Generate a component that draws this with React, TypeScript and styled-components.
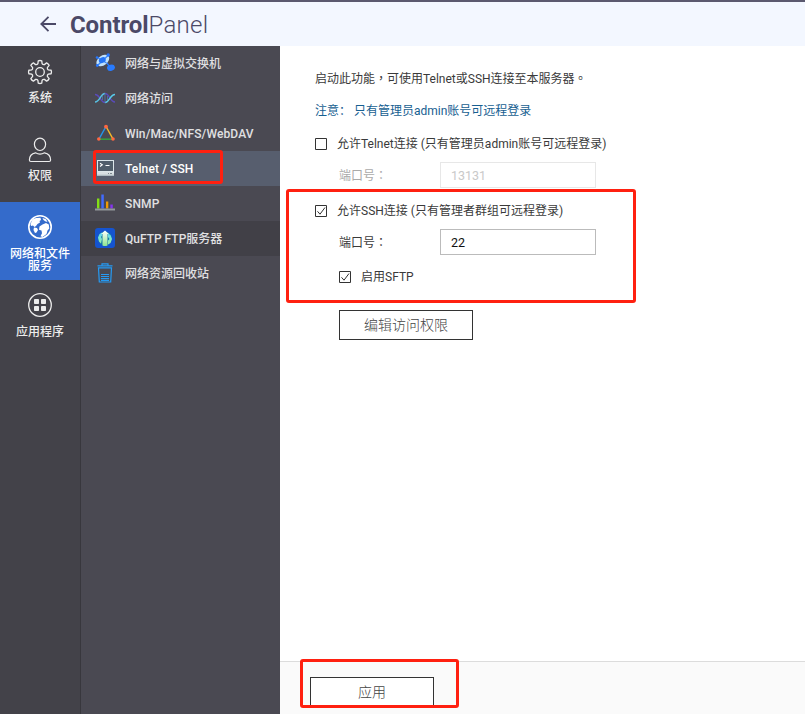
import React from 'react';
import styled, { createGlobalStyle, css } from 'styled-components';

const GlobalStyle = createGlobalStyle`
  *, *::before, *::after { box-sizing: border-box; }
  html, body { margin: 0; padding: 0; overflow: hidden; }
  button, input { font: inherit; }
`;

const Shell = styled.div`
  position: relative;
  display: flex;
  flex-direction: column;
  width: 805px;
  height: 714px;
  overflow: hidden;
  background: #fff;
  color: #333;
  font: 12px/16px Roboto, "Noto Sans CJK TC", sans-serif;
`;

const Header = styled.header`
  display: flex;
  flex: none;
  align-items: center;
  height: 46px;
  padding: 1px 0 0 40px;
  border-top: 2px solid #5b596f;
  background: #f3f7ff;
  color: #4b4967;
`;

const BackIcon = styled.svg`
  width: 16px;
  height: 16px;
  margin-bottom: 1px;
`;

const Title = styled.h1`
  margin: 0 0 0 14px;
  font-size: 24px;
  line-height: 32px;
  font-weight: 300;
  letter-spacing: 0.3px;
  b { font-weight: 700; letter-spacing: -0.1px; }
`;

const Body = styled.div`
  display: flex;
  flex: 1;
  min-height: 0;
`;

const Nav = styled.nav`
  display: flex;
  flex: none;
  flex-direction: column;
  width: 80px;
  background: #434249;
`;

const NavItem = styled.a<{ $active?: boolean }>`
  display: flex;
  flex-direction: column;
  align-items: center;
  height: 78px;
  padding-top: 13px;
  background: ${p => (p.$active ? '#346bcb' : 'transparent')};
  color: ${p => (p.$active ? '#fff' : '#ececec')};
  svg { width: 26px; height: 26px; flex: none; }
`;

const NavLabel = styled.span`
  width: 62px;
  margin-top: 7px;
  font: 500 12px/12px Roboto, "Noto Sans CJK SC", sans-serif;
  text-align: center;
`;

const Menu = styled.nav`
  flex: none;
  width: 200px;
  border-left: 1px solid #38373d;
  background: #4a4952;
`;

const MenuItem = styled.a<{ $tone?: 'selected' | 'dark' }>`
  display: flex;
  align-items: center;
  gap: 10px;
  height: 35px;
  padding-left: 14px;
  color: #e0e0e2;
  font: 500 12px/16px Roboto, "Noto Sans CJK SC", sans-serif;
  ${p => p.$tone === 'selected' && css`background: #575e6e; color: #fff;`}
  ${p => p.$tone === 'dark' && css`background: #414047;`}
  svg { width: 20px; height: 20px; flex: none; margin-bottom: 1px; }
`;

const MenuText = styled.span<{ $latin?: boolean }>`
  letter-spacing: ${p => (p.$latin ? '0.12px' : 'normal')};
`;

const Main = styled.main`
  display: flex;
  flex: 1;
  flex-direction: column;
`;

const Form = styled.div`
  flex: 1;
  padding: 17px 0 0 35px;
`;

const Line = styled.div<{ $h: number; $indent?: boolean; $tone?: string }>`
  display: flex;
  align-items: center;
  height: ${p => p.$h}px;
  padding-left: ${p => (p.$indent ? 24 : 0)}px;
  color: ${p => p.$tone ?? '#3a3a3a'};
  white-space: pre;
`;

const Check = styled.svg`
  flex: none;
  width: 12px;
  height: 12px;
  margin-right: 10px;
`;

const FieldLabel = styled.label`
  width: 101px;
  padding-top: 2px;
`;

const Field = styled.input`
  width: 156px;
  height: 26px;
  padding: 0 10px;
  border: 1px solid #bbb;
  border-radius: 0;
  background: #fff;
  color: #111;
  font-size: 12.5px;
  outline: 0;
  &:disabled { border-color: #e7e7e7; color: #c9c9c9; }
`;

const Button = styled.button<{ $w: number }>`
  width: ${p => p.$w}px;
  height: 30px;
  padding: 0 0 1px;
  border: 1px solid #333;
  background: #fff;
  color: #444;
  font: 300 14px/20px Roboto, "Noto Sans CJK SC", sans-serif;
`;

const Actions = styled.div`
  padding: 10px 0 0 24px;
`;

const Footer = styled.footer`
  height: 53px;
  padding: 15px 0 0 30px;
  border-top: 1px solid #dcdcdc;
  background: #fafafa;
`;

const Marker = styled.div<{ $x: number; $y: number; $w: number; $h: number }>`
  position: absolute;
  left: ${p => p.$x}px;
  top: ${p => p.$y}px;
  width: ${p => p.$w}px;
  height: ${p => p.$h}px;
  border: 3px solid #ff2010;
  border-radius: 3px;
  pointer-events: none;
`;

function Checkbox({ checked }: { checked?: boolean }) {
  return (
    <Check viewBox="0 0 12 12" fill="none" stroke="#333">
      <path d="M.5.5h11v11H.5z" />
      {checked && <path d="M2.5 6.3 5 9.2 10 2.5" />}
    </Check>
  );
}

const gearPath = Array.from({ length: 8 }, (_, i) => {
  const at = (r: number, deg: number) => {
    const a = ((i * 45 + deg - 90) * Math.PI) / 180;
    return `${(13 + r * Math.cos(a)).toFixed(2)} ${(13 + r * Math.sin(a)).toFixed(2)}`;
  };
  return `${i ? 'L' : 'M'}${at(8.6, -14)}L${at(11.3, -9)}Q${at(11.8, 0)} ${at(11.3, 9)}L${at(8.6, 14)}Q${at(7.6, 22.5)} ${at(8.6, 31)}`;
}).join('') + 'Z';

const GearIcon = () => (
  <svg viewBox="0 0 26 26" fill="none" stroke="currentColor" strokeWidth="1.3" strokeLinejoin="round">
    <path d={gearPath} /><circle cx="13" cy="13" r="4.3" />
  </svg>
);
const UserIcon = () => (
  <svg viewBox="0 0 26 26" fill="none" stroke="currentColor" strokeWidth="1.2">
    <ellipse cx="13" cy="7.3" rx="5.6" ry="6.2" />
    <path d="M8.5 15.8q4.5 2.5 9 0C22 16.7 23.6 19.5 23.6 23q0 1.5-1.5 1.5H3.9q-1.5 0-1.5-1.5c0-3.5 1.6-6.3 6.1-7.2Z" />
  </svg>
);
const GlobeIcon = () => (
  <svg viewBox="0 0 26 26" fill="currentColor">
    <circle cx="13" cy="12" r="11.2" fill="none" stroke="currentColor" strokeWidth="1.6" />
    <path d="M3.500 9 5.500 4.500 9 3l4.500-.3L14 5l-1.500 1 .5 1.500-2.500 1.500L9 11l-1.500 1L6 10.500 4 11Z" />
    <path d="m7 12.500 3 .5 1 2-1.500 2.500-1.500.5-1.500-3Z" />
    <path d="m15.500 3 3.500 1.200L20.500 7l-2.300-.7L16.500 5ZM15.500 9.500l3.500-1.500 2.800 1.500.5 4-1.800 2-1 3.500-4 3-2-.8 1.500-3-.5-2.700-2.500-.8.500-3.200Z" />
  </svg>
);
const AppsIcon = () => (
  <svg viewBox="0 0 26 26" fill="currentColor">
    <circle cx="13" cy="12" r="11.3" fill="none" stroke="currentColor" strokeWidth="1.3" />
    <rect x="7" y="6" width="5" height="5" rx=".8" /><rect x="14" y="6" width="5" height="5" rx=".8" />
    <rect x="7" y="13" width="5" height="5" rx=".8" /><rect x="14" y="13" width="5" height="5" rx=".8" />
  </svg>
);

const SwitchIcon = () => (
  <svg viewBox="0 0 20 20">
    <path d="m11 9 4 5" stroke="#2676ff" strokeWidth="1.5" />
    <ellipse cx="7.800" cy="7.500" rx="7.200" ry="4.800" transform="rotate(-38 7.800 7.500)" fill="#bfe0fb" />
    <path d="m2.500 4.500 9 5.500M2.500 12.500 13 2.500" stroke="#3c86f5" strokeWidth="1.3" />
    <ellipse cx="7.300" cy="7.200" rx="3.600" ry="2.700" transform="rotate(-30 7.300 7.200)" fill="#2373f5" />
    <circle cx="13.200" cy="2" r="1.700" fill="#2576ff" /><circle cx="2" cy="4.500" r="1.300" fill="#2576ff" /><circle cx="2.300" cy="12.500" r="1.400" fill="#2576ff" />
    <ellipse cx="16" cy="14.800" rx="4" ry="3.100" transform="rotate(-15 16 14.800)" fill="#287bff" />
  </svg>
);
const AccessIcon = () => (
  <svg viewBox="0 0 20 20" fill="none" strokeWidth="1.5">
    <path d="M0 6.500C5 6.500 5.500 14.500 10 14.500" stroke="#5a4bba" />
    <path d="M10 5.500C14.500 5.500 15 14 20 14" stroke="#5a4bba" />
    <path d="M0 14C5 14 5.500 5.500 10 5.500" stroke="#58bfe2" />
    <path d="M10 14.500C14.500 14.500 15 6.500 20 6.500" stroke="#58cbea" />
    <path d="M10 5v10M7.500 8v4M12.500 8v4" stroke="#5277b5" strokeWidth=".8" />
  </svg>
);
const TriangleIcon = () => (
  <svg viewBox="0 0 20 20" strokeWidth="1.5">
    <path d="M11 3.500 4 16" stroke="#2396ec" /><path d="m11 3.500 7 12.500" stroke="#f6b928" /><path d="M4 16.200h14" stroke="#35a23f" />
    <circle cx="11" cy="3.700" r="1.9" fill="#ff6742" /><circle cx="3.800" cy="16" r="1.800" fill="#ff6742" /><circle cx="18" cy="16" r="1.800" fill="#ff6742" />
  </svg>
);
const TerminalIcon = () => (
  <svg viewBox="0 0 20 20">
    <path d="M2 2h17v12H2z" fill="#dce6ea" /><path d="M3 3h15v10H3z" fill="#515e6b" />
    <path d="M2 14h17v4H2z" fill="#d8dfe2" /><path d="M2 16.700h17V18H2z" fill="#aebbc1" />
    <path d="m5 5.300 2.300 1.500L5 8.500M10.500 7.500h4" fill="none" stroke="#fff" strokeWidth="1.1" />
    <path d="M13 15.500h1M15 15.500h2" stroke="#7c8990" />
  </svg>
);
const BarsIcon = () => (
  <svg viewBox="0 0 20 20">
    <path fill="#83df16" d="M2 5.500h2.400v10H2z" /><path fill="#416bff" d="M6.300 1.500h2.500v14H6.300z" />
    <path fill="#f29b00" d="M11 8.500h2.300v7H11z" /><path fill="#8533ed" d="M15.300 11.500h2.500v4h-2.500z" />
    <path fill="#92999b" d="M0 15.500h20v2H0z" />
  </svg>
);
const FtpIcon = () => (
  <svg viewBox="0 0 20 20">
    <defs>
      <linearGradient id="ftp-land" x2="0" y2="1"><stop stopColor="#55d5ff" /><stop offset="1" stopColor="#a6f0a0" /></linearGradient>
      <linearGradient id="ftp-arrow" x2="0" y2="1"><stop stopColor="#fff" /><stop offset="1" stopColor="#8fe58f" /></linearGradient>
    </defs>
    <rect width="20" height="20" rx="3" fill="#1554d0" />
    <circle cx="10" cy="10.500" r="7" fill="#137aa5" />
    <path d="M3 9.500 4.500 6 7 4.500v3L6 9l1 2-1 4.500-2-2ZM13 5.500 15.500 7l1.500 4-1.500 4-2.500 1.500v-4l1.500-1.500-1.500-2Z" fill="url(#ftp-land)" />
    <path d="m10 2.500 4 3.500h-1.500v11.500q-2.500 1-5 0V6H6Z" fill="url(#ftp-arrow)" />
  </svg>
);
const TrashIcon = () => (
  <svg viewBox="0 0 20 20" fill="none" stroke="#259af3" strokeWidth="1.200">
    <path d="M2.500 2.800h15M7 2.500V.800h6v1.700M3.500 4.800l.8 14.200h11.400l.8-14.200Z" />
    <path d="M6 11.500h8M6 13.500h8M6 15.500h8M6 17.300h8" />
  </svg>
);

const navItems = [
  { label: '系统', Icon: GearIcon },
  { label: '权限', Icon: UserIcon },
  { label: '网络和文件服务', Icon: GlobeIcon, active: true },
  { label: '应用程序', Icon: AppsIcon },
];

const menuItems: { label: string; Icon: React.FC; tone?: 'selected' | 'dark'; latin?: boolean }[] = [
  { label: '网络与虚拟交换机', Icon: SwitchIcon },
  { label: '网络访问', Icon: AccessIcon },
  { label: 'Win/Mac/NFS/WebDAV', Icon: TriangleIcon, latin: true },
  { label: 'Telnet / SSH', Icon: TerminalIcon, tone: 'selected', latin: true },
  { label: 'SNMP', Icon: BarsIcon, latin: true },
  { label: 'QuFTP FTP服务器', Icon: FtpIcon, tone: 'dark' },
  { label: '网络资源回收站', Icon: TrashIcon },
];

export default function App() {
  return (
    <Shell lang="zh-CN">
      <GlobalStyle />
      <Header>
        <BackIcon viewBox="0 0 16 16" fill="none" stroke="currentColor" strokeWidth="1.8">
          <path d="M16 8H1.500M8.500.800 1.300 8l7.200 7.200" />
        </BackIcon>
        <Title><b>Control</b>Panel</Title>
      </Header>
      <Body>
        <Nav>
          {navItems.map(({ label, Icon, active }) => (
            <NavItem key={label} $active={active}><Icon /><NavLabel>{label}</NavLabel></NavItem>
          ))}
        </Nav>
        <Menu>
          {menuItems.map(({ label, Icon, tone, latin }) => (
            <MenuItem key={label} $tone={tone}><Icon /><MenuText $latin={latin}>{label}</MenuText></MenuItem>
          ))}
        </Menu>
        <Main>
          <Form>
            <Line $h={31} lang="zh-TW">启动此功能，可使用Telnet或SSH连接至本服务器。</Line>
            <Line $h={33} $tone="#176091">注意： 只有管理员admin账号可远程登录</Line>
            <Line $h={33}><Checkbox />允许Telnet连接 (只有管理员admin账号可远程登录)</Line>
            <Line $h={30} $indent $tone="#aaa" lang="zh-TW">
              <FieldLabel>端口号：</FieldLabel><Field disabled defaultValue="13131" />
            </Line>
            <Line $h={41}><Checkbox checked />允许SSH连接 (只有管理者群组可远程登录)</Line>
            <Line $h={22} $indent lang="zh-TW">
              <FieldLabel>端口号：</FieldLabel><Field defaultValue="22" />
            </Line>
            <Line $h={47} $indent><Checkbox checked />启用SFTP</Line>
            <Actions><Button $w={134}>编辑访问权限</Button></Actions>
          </Form>
          <Footer><Button $w={124}>应用</Button></Footer>
        </Main>
      </Body>
      <Marker $x={93} $y={150} $w={130} $h={34} />
      <Marker $x={286} $y={189} $w={350} $h={114} />
      <Marker $x={300} $y={659} $w={159} $h={49} />
    </Shell>
  );
}
